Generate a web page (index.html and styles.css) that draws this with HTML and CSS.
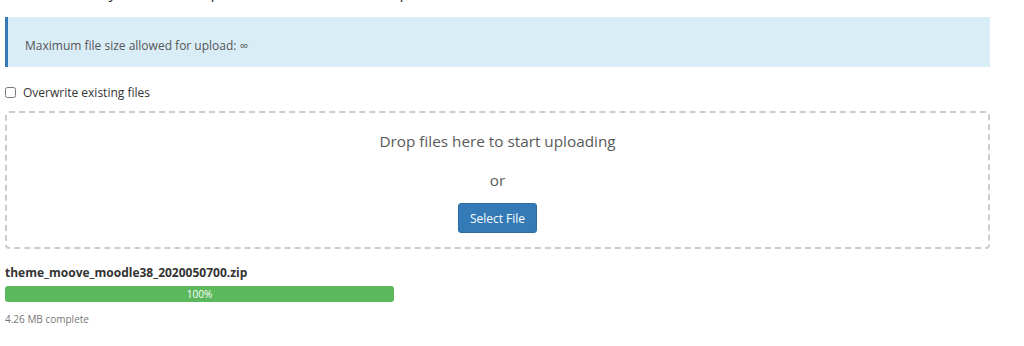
FILE: index.html
```html
<!DOCTYPE html>
<html lang="en">
<head>
    <meta charset="UTF-8">
    <meta name="viewport" content="width=device-width, initial-scale=1.0">
    <title>File Upload</title>
    <link rel="stylesheet" href="styles.css">
</head>
<body>
    <div class="container">
        <h4 class="page-title">Select the file you want to upload to “/home/moodle/public_html”.</h4>
        <div class="alert-info">Maximum file size allowed for upload: ∞</div>
        <div class="checkbox">
            <input type="checkbox" id="overwrite">
            <label for="overwrite">Overwrite existing files</label>
        </div>
        <div class="dropzone">
            <p class="drop-text">Drop files here to start uploading</p>
            <p class="drop-or">or</p>
            <button class="btn-primary">Select File</button>
        </div>
        <div class="upload-item">
            <div class="file-name">theme_moove_moodle38_2020050700.zip</div>
            <div class="progress">
                <div class="progress-bar" style="width: 100%;">100%</div>
            </div>
            <div class="file-status">4.26 MB complete</div>
        </div>
    </div>
</body>
</html>
```

FILE: styles.css
```css
body {
    font-family: "Open Sans", Arial, sans-serif;
    margin: 0;
    background-color: #fff;
    color: #555;
}
.container {
    width: 985px;
    margin-left: 5px;
    overflow: hidden;
}
.page-title {
    font-size: 16px;
    font-weight: normal;
    line-height: 22px;
    margin: -19px 0 14px 0;
    color: #333;
}
.alert-info {
    background-color: #d9edf7;
    border-left: 3px solid #337ab7;
    padding: 20px 17px 12px 17px;
    font-size: 12px;
    line-height: 18px;
    color: #555;
}
.checkbox {
    display: flex;
    align-items: center;
    margin-top: 17px;
    font-size: 12px;
    color: #333;
}
.checkbox input {
    width: 11px;
    height: 11px;
    margin: 0 7px 0 0;
}
.dropzone {
    margin-top: 10px;
    border: 2px dashed #ccc;
    border-radius: 4px;
    height: 134px;
    text-align: center;
}
.drop-text {
    font-size: 15.3px;
    margin: 17px 0 0 0;
    line-height: 22px;
    color: #595959;
}
.drop-or {
    font-size: 15.3px;
    margin: 17px 0 0 0;
    line-height: 22px;
    color: #595959;
}
.btn-primary {
    margin-top: 12px;
    width: 79px;
    height: 30px;
    background-color: #337ab7;
    color: #fff;
    border: 1px solid #2e6da4;
    border-radius: 3px;
    font-family: "Open Sans", Arial, sans-serif;
    font-size: 12px;
    cursor: pointer;
}
.btn-primary:hover {
    background-color: #286090;
}
.upload-item {
    margin-top: 15px;
}
.file-name {
    font-size: 12px;
    font-weight: bold;
    line-height: 18px;
    color: #333;
}
.progress {
    width: 389px;
    height: 16px;
    margin-top: 4px;
    background-color: #f5f5f5;
    border-radius: 3px;
    overflow: hidden;
}
.progress-bar {
    height: 100%;
    background-color: #5cb85c;
    color: #fff;
    font-size: 10px;
    line-height: 16px;
    text-align: center;
}
.file-status {
    font-size: 10px;
    line-height: 14px;
    margin-top: 10px;
    color: #777;
}
```
